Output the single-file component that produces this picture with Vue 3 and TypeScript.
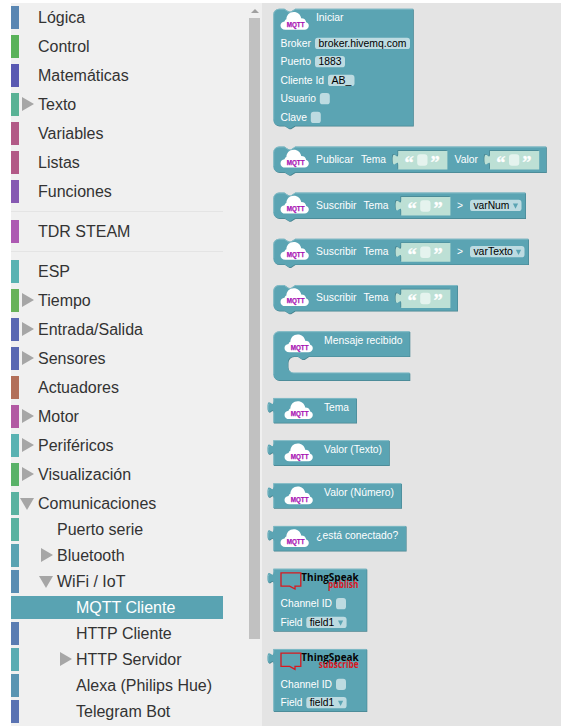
<script setup lang="ts">
interface Category {
  name: string
  color: string
  level?: number
  arrow?: 'right' | 'down'
  tight?: boolean
  divided?: boolean
  selected?: boolean
}

interface Label { x: number; y: number; text: string; w: number }
interface Field { x: number; y: number; w: number; text?: string; tw?: number; menu?: boolean }
interface Block {
  kind: 'statement' | 'value' | 'event'
  top: number
  right: number
  bottom: number
  cloud?: number
  speak?: { text: string; x: number; w: number }
  labels: Label[]
  fields?: Field[]
  strings?: number[]
}

const categories: Category[] = [
  { name: 'Lógica', color: '#5986b2' },
  { name: 'Control', color: '#59b259' },
  { name: 'Matemáticas', color: '#5959b2' },
  { name: 'Texto', color: '#59b295', arrow: 'right' },
  { name: 'Variables', color: '#b25986' },
  { name: 'Listas', color: '#b25986' },
  { name: 'Funciones', color: '#8659b2', divided: true },
  { name: 'TDR STEAM', color: '#ad59b2', divided: true },
  { name: 'ESP', color: '#59b2b2' },
  { name: 'Tiempo', color: '#68b259', arrow: 'right' },
  { name: 'Entrada/Salida', color: '#5968b2', arrow: 'right' },
  { name: 'Sensores', color: '#5968b2', arrow: 'right' },
  { name: 'Actuadores', color: '#b26f59' },
  { name: 'Motor', color: '#b259a3', arrow: 'right' },
  { name: 'Periféricos', color: '#59b2b2', arrow: 'right' },
  { name: 'Visualización', color: '#59b268', arrow: 'right' },
  { name: 'Comunicaciones', color: '#59b2a0', arrow: 'down', tight: true },
  { name: 'Puerto serie', color: '#59b2a0', level: 1, tight: true },
  { name: 'Bluetooth', color: '#59a3b2', level: 1, arrow: 'right', tight: true },
  { name: 'WiFi / IoT', color: '#598cb2', level: 1, arrow: 'down', tight: true },
  { name: 'MQTT Cliente', color: '#59a3b2', level: 2, tight: true, selected: true },
  { name: 'HTTP Cliente', color: '#597cb2', level: 2, tight: true },
  { name: 'HTTP Servidor', color: '#59acb2', level: 2, arrow: 'right', tight: true },
  { name: 'Alexa (Philips Hue)', color: '#5995b2', level: 2, tight: true },
  { name: 'Telegram Bot', color: '#5972b2', level: 2, tight: true },
]

const blocks: Block[] = [
  {
    kind: 'statement', top: 9, right: 413.5, bottom: 126, cloud: 280.5,
    labels: [
      { x: 316, y: 21, text: 'Iniciar', w: 27.5 },
      { x: 280.5, y: 47, text: 'Broker', w: 30.5 },
      { x: 280.5, y: 65.2, text: 'Puerto', w: 30.5 },
      { x: 280.5, y: 84, text: 'Cliente Id', w: 43.5 },
      { x: 280.5, y: 102.2, text: 'Usuario', w: 35.5 },
      { x: 280.5, y: 121, text: 'Clave', w: 26.5 },
    ],
    fields: [
      { x: 315, y: 37.8, w: 95, text: 'broker.hivemq.com', tw: 88 },
      { x: 315, y: 56, w: 30, text: '1883', tw: 23 },
      { x: 328, y: 74.8, w: 26.5, text: 'AB_', tw: 20 },
      { x: 319.8, y: 93, w: 10 },
      { x: 310.8, y: 111.8, w: 10 },
    ],
  },
  {
    kind: 'statement', top: 146.8, right: 546.5, bottom: 172.5, cloud: 280.5,
    labels: [
      { x: 316, y: 163, text: 'Publicar', w: 37.5 },
      { x: 361, y: 163, text: 'Tema', w: 25 },
      { x: 454.5, y: 163, text: 'Valor', w: 23.5 },
    ],
    strings: [398.2, 490],
  },
  {
    kind: 'statement', top: 192.8, right: 525.7, bottom: 218.5, cloud: 280.5,
    labels: [
      { x: 316, y: 209, text: 'Suscribir', w: 40.5 },
      { x: 363.5, y: 209, text: 'Tema', w: 25 },
      { x: 457, y: 209, text: '>', w: 6 },
    ],
    fields: [{ x: 470, y: 199.8, w: 51.5, text: 'varNum', tw: 36, menu: true }],
    strings: [401.2],
  },
  {
    kind: 'statement', top: 239, right: 528.7, bottom: 264.7, cloud: 280.5,
    labels: [
      { x: 316, y: 255, text: 'Suscribir', w: 40.5 },
      { x: 363.5, y: 255, text: 'Tema', w: 25 },
      { x: 457, y: 255, text: '>', w: 6 },
    ],
    fields: [{ x: 470, y: 246, w: 54.5, text: 'varTexto', tw: 39.5, menu: true }],
    strings: [401.2],
  },
  {
    kind: 'statement', top: 285.3, right: 457.7, bottom: 311, cloud: 280.5,
    labels: [
      { x: 316, y: 301, text: 'Suscribir', w: 40.5 },
      { x: 363.5, y: 301, text: 'Tema', w: 25 },
    ],
    strings: [401.2],
  },
  {
    kind: 'event', top: 331.5, right: 410, bottom: 380.5, cloud: 284.5,
    labels: [{ x: 324, y: 344, text: 'Mensaje recibido', w: 78.5 }],
  },
  {
    kind: 'value', top: 398.3, right: 356.7, bottom: 423, cloud: 284.5,
    labels: [{ x: 324, y: 411, text: 'Tema', w: 25 }],
  },
  {
    kind: 'value', top: 440.5, right: 389.5, bottom: 465.5, cloud: 284.5,
    labels: [{ x: 324, y: 453, text: 'Valor (Texto)', w: 58 }],
  },
  {
    kind: 'value', top: 483.5, right: 401.7, bottom: 508.3, cloud: 284.5,
    labels: [{ x: 324, y: 496, text: 'Valor (Número)', w: 70 }],
  },
  {
    kind: 'value', top: 526.2, right: 406.3, bottom: 551, cloud: 280.5,
    labels: [{ x: 316.3, y: 539, text: '¿está conectado?', w: 82 }],
  },
  {
    kind: 'value', top: 569, right: 367, bottom: 631.3,
    speak: { text: 'publish', x: 328, w: 30.5 },
    labels: [
      { x: 280.5, y: 607, text: 'Channel ID', w: 51.5 },
      { x: 280.5, y: 626, text: 'Field', w: 22 },
    ],
    fields: [
      { x: 336, y: 598, w: 10 },
      { x: 306.3, y: 616.8, w: 40.3, text: 'field1', tw: 24.5, menu: true },
    ],
  },
  {
    kind: 'value', top: 649.3, right: 367, bottom: 711.5,
    speak: { text: 'subscribe', x: 318.8, w: 40 },
    labels: [
      { x: 280.5, y: 688, text: 'Channel ID', w: 51.5 },
      { x: 280.5, y: 706, text: 'Field', w: 22 },
    ],
    fields: [
      { x: 336, y: 678.7, w: 10 },
      { x: 306.3, y: 697, w: 40.3, text: 'field1', tw: 24.5, menu: true },
    ],
  },
]

const LEFT = 273.6

function outline(b: Block): string {
  const h = b.bottom
  if (b.kind === 'value') {
    return `M${LEFT},${b.top}H${b.right}V${h}H${LEFT}V${b.top + 14.6}c0,-7.3 -5.8,5.8 -5.8,-5.5s5.8,1.8 5.8,-5.5z`
  }
  if (b.kind === 'event') {
    return `M${LEFT},${b.top + 5.8}a5.8,5.8 0 0 1 5.8,-5.8H${b.right}V${b.top + 25.2}H308.8l-4.4,2.9h-2.2l-4.4,-2.9H294` +
      `a5.8,5.8 0 0 0 -5.8,5.8v4.7a5.8,5.8 0 0 0 5.8,5.8H${b.right}V${h}H${LEFT + 5.8}a5.8,5.8 0 0 1 -5.8,-5.8z`
  }
  return `M${LEFT},${b.top + 5.8}a5.8,5.8 0 0 1 5.8,-5.8H284.6l4.4,2.9h2.2l4.4,-2.9H${b.right}V${h}` +
    `H295.2l-4.4,2.9h-1.6l-4.4,-2.9H${LEFT + 5.8}a5.8,5.8 0 0 1 -5.8,-5.8z`
}

function highlight(b: Block): string {
  const t = b.top + 0.4
  const l = LEFT + 0.4
  if (b.kind === 'value') return `M${l},${b.bottom - 0.5}V${b.top + 14.6}M${l},${b.top + 3.6}V${t}H${b.right - 0.5}M268.3,${b.top + 12}q-.6,-5 1.2,-6.4`
  if (b.kind === 'event') {
    return `M${l},${b.bottom - 6}V${b.top + 6}a5.4,5.4 0 0 1 5.4,-5.5H${b.right - 0.5}M290,${b.top + 40}q1.5,1.7 4,1.7H${b.right - 0.5}`
  }
  return `M${l},${b.bottom - 6}V${b.top + 6}a5.4,5.4 0 0 1 5.4,-5.5H284.6l4.4,2.9h2.2l4.4,-2.9H${b.right - 0.5}`
}

function stringPath(x: number, top: number): string {
  return `M${x},${top}h49.2v18.6h-49.2v-4.4c0,-7.3 -5.6,5.8 -5.6,-5.5s5.6,1.8 5.6,-5.5z`
}
</script>

<template>
  <main class="editor">
    <nav class="toolbox">
      <ul class="tree">
        <li
          v-for="c in categories"
          :key="c.name"
          class="row"
          :class="[`level-${c.level ?? 0}`, { tight: c.tight, divided: c.divided, selected: c.selected }]"
          :style="{ borderLeftColor: c.color }"
        >
          <span class="arrow" :class="c.arrow"></span>
          <span class="name">{{ c.name }}</span>
        </li>
      </ul>
      <div class="scrollbar">
        <span class="scroll-up"></span>
        <span class="thumb"></span>
      </div>
    </nav>

    <svg class="flyout" viewBox="262 3 299 723" width="299" height="723">
      <g v-for="(b, i) in blocks" :key="i">
        <path class="shade" :d="outline(b)" transform="translate(.3 .4)" />
        <path class="body" :d="outline(b)" transform="translate(-.3 -.3)" />
        <path class="light" :d="highlight(b)" transform="translate(-.3 -.3)" />

        <g v-if="b.cloud" :transform="`translate(${b.cloud} ${b.top + 3})`">
          <path class="cloud" d="M4.8 17.8C2 17.8 0 16 0 13.6c0-2.300 1.600-4 4-4.200C4.400 8.200 5 7.500 5.900 7.200 5.900 3.200 9 0 13.200 0c4 0 6.800 2.500 7.500 6.200 3 0 4.700 1.600 5 4.100 1.600.5 2.600 1.800 2.600 3.500 0 2.300-1.800 4-4.300 4z" />
          <text class="mqtt" x="6.200" y="15" textLength="17.800" lengthAdjust="spacingAndGlyphs">MQTT</text>
        </g>

        <g v-if="b.speak">
          <path class="bubble" :d="`M281,${b.top + 3.8}h19.800v13.300h-5.800v2.900l-5.300,-2.900h-8.700z`" />
          <text class="brand" x="301.300" :y="b.top + 11.600" textLength="57.500" lengthAdjust="spacingAndGlyphs">ThingSpeak</text>
          <text class="action" :x="b.speak.x" :y="b.top + 19" :textLength="b.speak.w" lengthAdjust="spacingAndGlyphs">{{ b.speak.text }}</text>
        </g>

        <text
          v-for="l in b.labels"
          :key="l.text"
          class="label"
          :x="l.x"
          :y="l.y"
          :textLength="l.w"
          lengthAdjust="spacingAndGlyphs"
        >{{ l.text }}</text>

        <g v-for="(f, n) in b.fields" :key="n">
          <rect class="field" :x="f.x" :y="f.y" :width="f.w" height="11.300" rx="2.900" />
          <text v-if="f.text" class="value" :x="f.x + 3.4" :y="f.y + 9.300" :textLength="f.tw" lengthAdjust="spacingAndGlyphs">{{ f.text }}</text>
          <path v-if="f.menu" class="caret" :d="`M${f.x + f.w - 8.6},${f.y + 3.700}h5.200l-2.600,5.300z`" />
        </g>

        <g v-for="s in b.strings" :key="s">
          <path class="socket" :d="stringPath(s, b.top + 4.1)" />
          <path class="string" :d="stringPath(s, b.top + 4.1)" />
          <text class="quote" :x="s + 6.200" :y="b.top + 21.800">“</text>
          <rect class="blank" :x="s + 19" :y="b.top + 7.400" width="10.300" height="11.500" rx="2.900" />
          <text class="quote" :x="s + 32.200" :y="b.top + 21.800">”</text>
        </g>
      </g>
    </svg>
  </main>
</template>

<style>
html,
body {
  background: #fff;
  overflow: hidden;
}
</style>

<style scoped>
.editor {
  box-sizing: border-box;
  display: flex;
  width: 561px;
  height: 726px;
  padding: 3px 0 0 11px;
  overflow: hidden;
  font-family: "Liberation Sans", Arial, sans-serif;
}

.toolbox {
  display: flex;
  justify-content: space-between;
  width: 251px;
  height: 723px;
  background: #f0f0f0;
}

.tree {
  width: 212px;
  margin: 0;
  padding: 3px 0 0;
  list-style: none;
}

.row {
  box-sizing: border-box;
  display: flex;
  align-items: center;
  height: 23px;
  margin-bottom: 6px;
  border-left: 8px solid;
  color: #333;
  font-size: 16px;
  line-height: 23px;
  white-space: nowrap;
}

.row.tight {
  margin-bottom: 3px;
}

.row.divided {
  position: relative;
  margin-bottom: 17px;
}

.row.divided::after {
  content: "";
  position: absolute;
  top: 31px;
  left: -8px;
  width: 212px;
  height: 1px;
  background: #e4e4e4;
}

.row.selected {
  background: #59a3b2;
  color: #fff;
}

.level-1 {
  padding-left: 19px;
}

.level-2 {
  padding-left: 38px;
}

.arrow {
  display: flex;
  flex: none;
  width: 19px;
}

.arrow.right::before {
  content: "";
  margin: -1px 0 0 3px;
  border-left: 12px solid #a6a6a6;
  border-top: 7px solid transparent;
  border-bottom: 7px solid transparent;
}

.arrow.down::before {
  content: "";
  margin: 1px 0 0 1px;
  border-top: 12px solid #a6a6a6;
  border-left: 7px solid transparent;
  border-right: 7px solid transparent;
}

.scrollbar {
  display: flex;
  flex-direction: column;
  align-items: center;
  width: 11px;
  margin-right: 2px;
}

.scroll-up {
  margin: 6px 0 5px;
  border-bottom: 4px solid #a0a0a0;
  border-left: 4px solid transparent;
  border-right: 4px solid transparent;
}

.thumb {
  width: 11px;
  height: 621px;
  background: #c1c1c1;
}

.flyout {
  display: block;
  flex: none;
  background: #e4e4e4;
}

.shade {
  fill: #478490;
}

.body {
  fill: #5ba4b3;
}

.light {
  fill: none;
  stroke: #8bc0ca;
  stroke-width: 0.8;
}

.cloud {
  fill: #fff;
}

.mqtt {
  fill: #a813b4;
  stroke: #a813b4;
  stroke-width: 0.25px;
  font-size: 6.8px;
  font-weight: 700;
}

.label {
  fill: #fff;
  font-size: 11.2px;
}

.value {
  fill: #000;
  font-size: 11.2px;
}

.field {
  fill: #bddbe1;
}

.caret {
  fill: #5ba4b3;
}

.socket {
  fill: #478490;
  transform: translate(-0.7px, -0.7px);
}

.string {
  fill: #bde0d5;
}

.blank {
  fill: #e5f3ee;
}

.quote {
  fill: #fff;
  stroke: #fff;
  stroke-width: 0.3px;
  font-family: "Liberation Serif", serif;
  font-size: 18.5px;
  font-weight: 700;
}

.bubble {
  fill: none;
  stroke: #d9181f;
  stroke-width: 1.3;
}

.brand {
  fill: #050505;
  font-family: "Open Sans", sans-serif;
  font-size: 11px;
  font-weight: 700;
}

.action {
  fill: #d9181f;
  font-family: "Open Sans", sans-serif;
  font-size: 9.9px;
  font-weight: 700;
}
</style>
